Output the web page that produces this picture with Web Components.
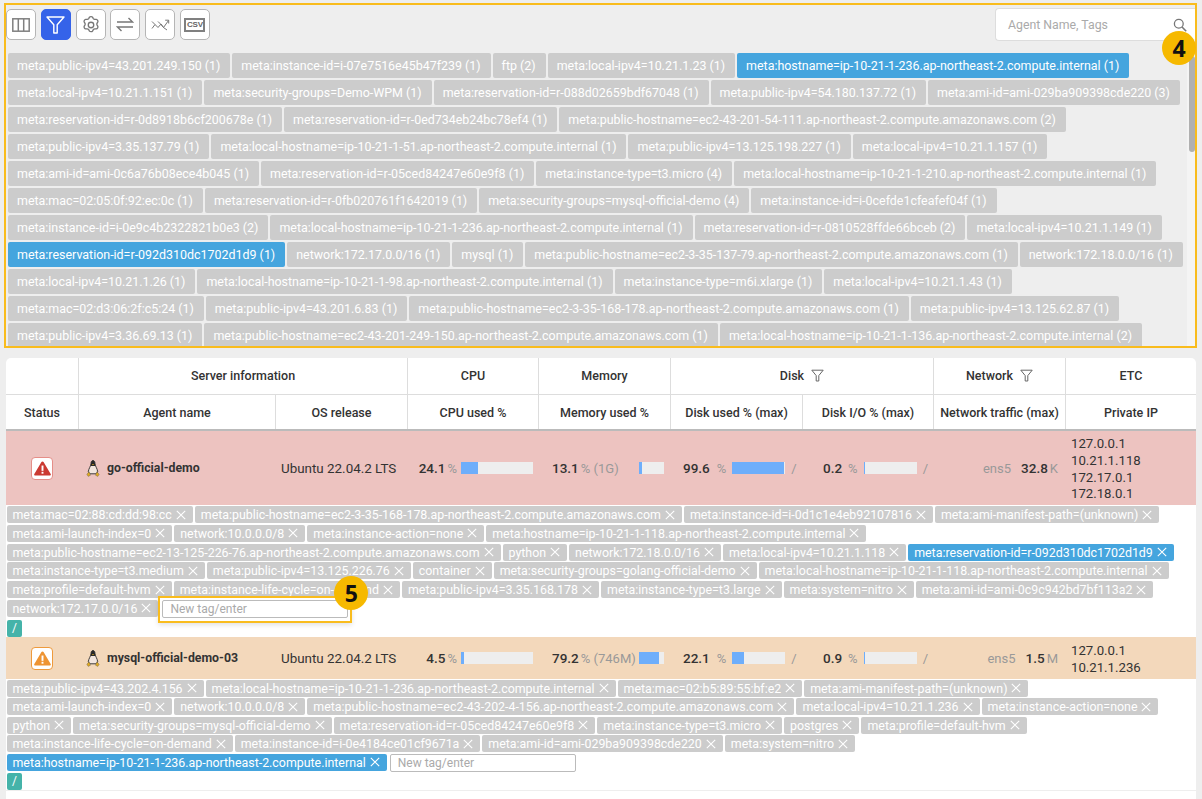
<!DOCTYPE html>
<html><head><meta charset="utf-8"><title>Agents</title>
<style>
html,body{margin:0;padding:0;background:#eee;overflow:hidden}
body{width:1202px;height:799px;font-family:Roboto,"Liberation Sans",sans-serif;color:#333}
</style></head><body>
<x-page></x-page>
<script>
const E=s=>s.replace(/&/g,'&amp;').replace(/</g,'&lt;');
function def(name,css,render){
  customElements.define(name,class extends HTMLElement{
    connectedCallback(){ if(this.shadowRoot)return; const r=this.attachShadow({mode:'open'});
      r.innerHTML='<style>'+css+'</style>'+render(this); }
  });
}
const ICONS={
 cols:'<svg width="18" height="14" viewBox="0 0 18 14" fill="none" stroke="#808080" stroke-width="1.5"><rect x=".8" y=".8" width="16.400" height="12.400"/><path d="M6.300 1v12M11.700 1v12"/></svg>',
 filter:'<svg width="19" height="18" viewBox="0 0 19 18" fill="none" stroke="#fff" stroke-width="1.400" stroke-linejoin="round"><path d="M1 1h17l-6.800 7.800V17H7.800V8.800z"/></svg>',
 gear:'<svg width="20" height="20" viewBox="0 0 24 24" fill="none" stroke="#777" stroke-width="1.600" stroke-linejoin="round" stroke-linecap="round"><circle cx="12" cy="12" r="3.300"/><path d="M10.200 2.600c.7-.9 3-.9 3.600 0l1 1.700c.4.600 1 .9 1.700.9h2c1.100.1 2.200 2.100 1.700 3.100l-1 1.700c-.3.600-.3 1.300 0 1.900l1 1.700c.5 1-.6 3-1.700 3.100h-2c-.7 0-1.300.3-1.700.9l-1 1.700c-.6.900-2.900.9-3.600 0l-1-1.700c-.4-.6-1-.9-1.700-.9h-2c-1.100-.1-2.200-2.100-1.700-3.100l1-1.700c.3-.6.3-1.300 0-1.900l-1-1.700c-.5-1 .6-3 1.700-3.100h2c.7 0 1.300-.3 1.700-.9z"/></svg>',
 swap:'<svg width="18" height="15" viewBox="0 0 18 15" fill="none" stroke="#777" stroke-width="1.400"><path d="M1 5h15.500L12.500 1M17 10H1.500l4 4"/></svg>',
 cross:'<svg width="19" height="12" viewBox="0 0 19 12" fill="none" stroke="#777" stroke-width="1"><path d="M1 2.500l3 3 3 3L10 5l2.500 3.500 5-7M14.200 1.200h3.500v3.300M1 9.500l3-4M7 2.500l3 3 2.500 3 3.500 2.500"/></svg>',
 search:'<svg width="14" height="14" viewBox="0 0 14 14" fill="none" stroke="#777" stroke-width="1.300"><circle cx="5.800" cy="5.800" r="4.400"/><path d="M9 9l4.200 4.200" stroke-width="1.600"/></svg>',
 funnel:'<svg width="13" height="13" viewBox="0 0 13 13" fill="none" stroke="#666" stroke-width="1"><path d="M.8 1.200h11.400L7.800 6.600v5.400H5.200V6.600z"/></svg>',
 tux:'<svg width="14" height="17" viewBox="0 0 14 17"><path d="M7 .6C5.500.6 5 2 5 3.800 5 5.800 2.600 8.600 2.300 11.800l1.400 2h6.600l1.400-2C11.400 8.600 9 5.800 9 3.800 9 2 8.500.6 7 .6z" fill="#f2e6df" stroke="#2a2a2a" stroke-width=".9"/><path d="M7 .6C5.500.6 5 2 5 3.800c0 .7-.3 1.500-.7 2.200h5.400C9.300 5.300 9 4.500 9 3.800 9 2 8.500.6 7 .6z" fill="#2a2a2a"/><path d="M5.900 4h2.200L7 5.200z" fill="#d9a520"/><path d="M.8 14.200l2.400-2.400 1.300 3.400-2.300 1.200zM13.200 14.200l-2.400-2.400-1.300 3.400 2.300 1.200z" fill="#e2ab1f" stroke="#555" stroke-width=".4"/></svg>',
 warn:c=>`<svg width="17" height="15" viewBox="0 0 16 14"><path d="M8 .3c.5 0 .8.2 1 .6l6.700 11.300c.4.700 0 1.500-.9 1.500H1.200c-.9 0-1.300-.8-.9-1.500L7 .9c.2-.4.500-.6 1-.6z" fill="${c}"/><rect x="7.100" y="4.200" width="1.800" height="5" fill="#fff"/><rect x="7.100" y="10.100" width="1.800" height="1.800" fill="#fff"/></svg>`
};
const CLOUD=[
["meta:public-ipv4=43.201.249.150 (1)","meta:instance-id=i-07e7516e45b47f239 (1)","ftp (2)","meta:local-ipv4=10.21.1.23 (1)","*meta:hostname=ip-10-21-1-236.ap-northeast-2.compute.internal (1)"],
["meta:local-ipv4=10.21.1.151 (1)","meta:security-groups=Demo-WPM (1)","meta:reservation-id=r-088d02659bdf67048 (1)","meta:public-ipv4=54.180.137.72 (1)","meta:ami-id=ami-029ba909398cde220 (3)"],
["meta:reservation-id=r-0d8918b6cf200678e (1)","meta:reservation-id=r-0ed734eb24bc78ef4 (1)","meta:public-hostname=ec2-43-201-54-111.ap-northeast-2.compute.amazonaws.com (2)"],
["meta:public-ipv4=3.35.137.79 (1)","meta:local-hostname=ip-10-21-1-51.ap-northeast-2.compute.internal (1)","meta:public-ipv4=13.125.198.227 (1)","meta:local-ipv4=10.21.1.157 (1)"],
["meta:ami-id=ami-0c6a76b08ece4b045 (1)","meta:reservation-id=r-05ced84247e60e9f8 (1)","meta:instance-type=t3.micro (4)","meta:local-hostname=ip-10-21-1-210.ap-northeast-2.compute.internal (1)"],
["meta:mac=02:05:0f:92:ec:0c (1)","meta:reservation-id=r-0fb020761f1642019 (1)","meta:security-groups=mysql-official-demo (4)","meta:instance-id=i-0cefde1cfeafef04f (1)"],
["meta:instance-id=i-0e9c4b2322821b0e3 (2)","meta:local-hostname=ip-10-21-1-236.ap-northeast-2.compute.internal (1)","meta:reservation-id=r-0810528ffde66bceb (2)","meta:local-ipv4=10.21.1.149 (1)"],
["*meta:reservation-id=r-092d310dc1702d1d9 (1)","network:172.17.0.0/16 (1)","mysql (1)","meta:public-hostname=ec2-3-35-137-79.ap-northeast-2.compute.amazonaws.com (1)","network:172.18.0.0/16 (1)"],
["meta:local-ipv4=10.21.1.26 (1)","meta:local-hostname=ip-10-21-1-98.ap-northeast-2.compute.internal (1)","meta:instance-type=m6i.xlarge (1)","meta:local-ipv4=10.21.1.43 (1)"],
["meta:mac=02:d3:06:2f:c5:24 (1)","meta:public-ipv4=43.201.6.83 (1)","meta:public-hostname=ec2-3-35-168-178.ap-northeast-2.compute.amazonaws.com (1)","meta:public-ipv4=13.125.62.87 (1)"],
["meta:public-ipv4=3.36.69.13 (1)","meta:public-hostname=ec2-43-201-249-150.ap-northeast-2.compute.amazonaws.com (1)","meta:local-hostname=ip-10-21-1-136.ap-northeast-2.compute.internal (2)"]
];
const CARD1=[
["meta:mac=02:88:cd:dd:98:cc","meta:public-hostname=ec2-3-35-168-178.ap-northeast-2.compute.amazonaws.com","meta:instance-id=i-0d1c1e4eb92107816","meta:ami-manifest-path=(unknown)"],
["meta:ami-launch-index=0","network:10.0.0.0/8","meta:instance-action=none","meta:hostname=ip-10-21-1-118.ap-northeast-2.compute.internal"],
["meta:public-hostname=ec2-13-125-226-76.ap-northeast-2.compute.amazonaws.com","python","network:172.18.0.0/16","meta:local-ipv4=10.21.1.118","*meta:reservation-id=r-092d310dc1702d1d9"],
["meta:instance-type=t3.medium","meta:public-ipv4=13.125.226.76","container","meta:security-groups=golang-official-demo","meta:local-hostname=ip-10-21-1-118.ap-northeast-2.compute.internal"],
["meta:profile=default-hvm","meta:instance-life-cycle=on-demand","meta:public-ipv4=3.35.168.178","meta:instance-type=t3.large","meta:system=nitro","meta:ami-id=ami-0c9c942bd7bf113a2"],
["network:172.17.0.0/16","#"]
];
const CARD2=[
["meta:public-ipv4=43.202.4.156","meta:local-hostname=ip-10-21-1-236.ap-northeast-2.compute.internal","meta:mac=02:b5:89:55:bf:e2","meta:ami-manifest-path=(unknown)"],
["meta:ami-launch-index=0","network:10.0.0.0/8","meta:public-hostname=ec2-43-202-4-156.ap-northeast-2.compute.amazonaws.com","meta:local-ipv4=10.21.1.236","meta:instance-action=none"],
["python","meta:security-groups=mysql-official-demo","meta:reservation-id=r-05ced84247e60e9f8","meta:instance-type=t3.micro","postgres","meta:profile=default-hvm"],
["meta:instance-life-cycle=on-demand","meta:instance-id=i-0e4184ce01cf9671a","meta:ami-id=ami-029ba909398cde220","meta:system=nitro"],
["*meta:hostname=ip-10-21-1-236.ap-northeast-2.compute.internal","@"]
];
const callout=`position:absolute;width:34px;height:34px;border-radius:50%;background:#f6b900;color:#111;font:700 23px/34px "Open Sans",Roboto,sans-serif;text-align:center;`;

def('x-callout',`:host{${callout}z-index:5}`,el=>E(el.getAttribute('n')));

def('x-toolbtn',`:host{display:flex;box-sizing:border-box;width:30px;height:31px;align-items:center;justify-content:center;background:#fff;border:1px solid #b5b5b5;border-radius:5px}
:host([on]){background:#3563e9;border-color:#3563e9}
.csv{display:block;box-sizing:border-box;width:21px;height:14px;border:2px solid #808080;font:700 8px/10px "Liberation Sans",sans-serif;color:#666;text-align:center;letter-spacing:-.2px}`,
 el=>el.getAttribute('icon')==='csv'?'<span class="csv">CSV</span>':ICONS[el.getAttribute('icon')]);

def('x-toolbar',`:host{display:flex;align-items:flex-start;justify-content:space-between;height:44px;padding:4px 0 0 0}
.l{display:flex;gap:4.800px}
.s{display:flex;box-sizing:border-box;align-items:center;justify-content:space-between;width:200px;height:33px;margin:-1px 0 0 0;padding:0 8px 0 12px;background:#fff;border:1px solid #ddd;border-radius:4px 0 0 4px;border-right:0;color:#aaa;font-size:12.300px}`,
 ()=>`<div class="l">${['cols','filter','gear','swap','cross','csv'].map(i=>`<x-toolbtn icon="${i}"${i==='filter'?' on':''}></x-toolbtn>`).join('')}</div>
 <div class="s"><span>Agent Name, Tags</span>${ICONS.search}</div>`);

def('x-chip',`:host{display:block;flex:none;box-sizing:border-box;height:24.500px;line-height:25px;padding:0 10px 0 9px;background:#ccc;color:#fff;font-size:12.450px;border-radius:2px;white-space:nowrap}
:host([on]){background:#45a5de}`,el=>'<slot></slot>');

def('x-cloud',`:host{display:block;position:relative;box-sizing:border-box;height:345px;margin:3px 5px 0 4px;border:2px solid #f9bc1d;overflow:hidden;background:#eee}
.rows{display:flex;flex-direction:column;gap:2.500px;height:300px;padding-left:2px}
.r{display:flex;gap:2px}
.sb{position:absolute;right:0;top:34px;bottom:0;width:8px;background:#f4f4f4}
.th{position:absolute;left:2px;top:17px;width:6px;height:96px;background:#b0b0b0;border-radius:3px}`,
 ()=>`<x-toolbar></x-toolbar><div class="rows">${CLOUD.map(r=>`<div class="r">${r.map(t=>{const on=t[0]==='*';return `<x-chip${on?' on':''}>${E(on?t.slice(1):t)}</x-chip>`}).join('')}</div>`).join('')}</div><div class="sb"><div class="th"></div></div>`);

def('x-tag',`:host{display:inline-flex;flex:none;align-items:center;gap:4px;box-sizing:border-box;height:17px;padding:0 7px 0 6px;background:#ccc;color:#fff;font-size:12.400px;border-radius:2px;white-space:nowrap}
:host([on]){background:#45a5de}
svg{display:block}`,el=>`<slot></slot><svg width="10" height="10" viewBox="0 0 10 10" stroke="#fff" stroke-width="1.100"><path d="M.8.8l8.400 8.400M9.200.8.800 9.200"/></svg>`);

def('x-newtag',`:host{display:block;position:relative;flex:none;box-sizing:border-box;width:186px;height:18px;line-height:16px;padding-left:7px;background:#fff;border:1px solid #bbb;border-radius:2px;color:#aaa;font-size:12px}
.box{position:absolute;left:-5px;top:-5px;right:-5px;bottom:-6px;border:2px solid #f9bc1d;box-shadow:0 2px 5px rgba(0,0,0,.12)}
x-callout{right:-21px;top:-25px}`,
 el=>`New tag/enter${el.hasAttribute('mark')?'<div class="box"></div><x-callout n="5"></x-callout>':''}`);

def('x-tags',`:host{display:block;background:#fff;padding:var(--pt) 0 0 .5px;height:var(--h);box-sizing:border-box}
.rows{display:flex;flex-direction:column;gap:var(--g)}
.r{display:flex;gap:2px}
.t{display:block;box-sizing:border-box;width:15px;height:17px;margin:var(--tm) 0 0 .5px;background:#45b3a9;color:#fff;font-size:12px;line-height:17px;text-align:center;border-radius:2px}`,
 el=>{const data=el.getAttribute('d')==='1'?CARD1:CARD2;
  return `<div class="rows">${data.map(r=>`<div class="r">${r.map(t=>{
    if(t==='#')return '<x-newtag mark style="margin-left:2px"></x-newtag>';
    if(t==='@')return '<x-newtag style="margin-left:1px"></x-newtag>';
    const on=t[0]==='*';return `<x-tag${on?' on':''}>${E(on?t.slice(1):t)}</x-tag>`}).join('')}</div>`).join('')}</div><div class="t">/</div>`});

def('x-bar',`:host{display:block;flex:none;width:var(--w);height:12px;background:#eee}
div{height:100%;background:#6eaefb;width:var(--f)}`,()=>'<div></div>');

const GRID='grid-template-columns:72px 197px 132px 131px 132px 132px 131px 132px 131px;';
def('x-head',`:host{display:grid;${GRID}grid-template-rows:37px 34px;background:#fff;border-radius:5px 5px 0 0;font-size:12.500px;font-weight:500;color:#333;border-bottom:2px solid #bbb;overflow:hidden}
div{display:flex;align-items:center;justify-content:center;gap:7px;border-left:1px solid #ddd;border-bottom:1px solid #ddd;white-space:nowrap;box-sizing:border-box;padding-bottom:2px}
.n{border-bottom:0;padding-bottom:0}.f{border-left:0}`,
 ()=>`<div class="f"></div><div style="grid-column:span 2">Server information</div><div>CPU</div><div>Memory</div><div style="grid-column:span 2">Disk ${ICONS.funnel}</div><div>Network ${ICONS.funnel}</div><div>ETC</div>
 <div class="n f">Status</div><div class="n">Agent name</div><div class="n">OS release</div><div class="n">CPU used %</div><div class="n">Memory used %</div><div class="n">Disk used % (max)</div><div class="n">Disk I/O % (max)</div><div class="n">Network traffic (max)</div><div class="n">Private IP</div>`);

def('x-row',`:host{display:grid;${GRID}align-items:center;background:var(--bg);height:var(--rh);font-size:13px;color:#333;white-space:nowrap}
.st{display:flex;justify-content:center}
.ib{display:flex;box-sizing:border-box;width:22px;height:23px;align-items:center;justify-content:center;background:#fff;border:1.500px solid var(--c);border-radius:4px}
.nm{display:flex;align-items:center;gap:7px;padding-left:8px;font-size:12.300px;font-weight:700}
.os{padding-left:6px;font-size:13.400px}
.m{display:flex;align-items:center}
b{font-weight:500;font-size:13.500px}
i{font-style:normal;color:#999;font-size:13px}
.ip{padding:3px 0 0 6px;line-height:16.700px;font-size:13.200px}`,
 el=>{const d=JSON.parse(el.getAttribute('d'));
  const bar=(w,f)=>`<x-bar style="--w:${w}px;--f:${f}px"></x-bar>`;
  return `<div class="st"><div class="ib">${ICONS.warn(d.c)}</div></div>
  <div class="nm">${ICONS.tux}<span>${d.name}</span></div>
  <div class="os">Ubuntu 22.04.2 LTS</div>
  <div class="m" style="justify-content:flex-end;padding-right:5px"><b>${d.cpu}</b><i style="margin:0 4px 0 2px">%</i>${bar(72,d.cf)}</div>
  <div class="m" style="padding-left:14px"><b>${d.mem}</b><i style="margin-left:2px">% ${d.mm}</i><span style="flex:1"></span><span style="margin-right:6px">${bar(25,d.mf)}</span></div>
  <div class="m" style="padding-left:13px"><b>${d.disk}</b><i style="margin:0 6px 0 7px">%</i>${bar(53,d.df)}<i style="margin-left:6px">/</i></div>
  <div class="m" style="padding-left:21px"><b>${d.io}</b><i style="margin:0 6px">%</i>${bar(53,d.iof)}<i style="margin-left:6px">/</i></div>
  <div class="m" style="justify-content:flex-end;padding-right:7px"><i>ens5</i><b style="margin:0 2px 0 10px">${d.net}</b><i>${d.nu}</i></div>
  <div class="ip">${d.ips.join('<br>')}</div>`});

def('x-table',`:host{display:block;width:1190px;margin:10px 0 0 6px}
.end{height:1px;background:#eee}
.fill{height:12px;background:#fff}`,
 ()=>`<x-head></x-head>
 <x-row style="--bg:#edc3c0;--rh:74px;--c:#e58e88" d='${JSON.stringify({c:"#cb3a32",name:"go-official-demo",cpu:"24.1",cf:17,mem:"13.1",mm:"(1G)",mf:3,disk:"99.6",df:52,io:"0.2",iof:1,net:"32.8",nu:"K",ips:["127.0.0.1","10.21.1.118","172.17.0.1","172.18.0.1"]})}'></x-row>
 <x-tags d="1" style="--h:132px;--pt:1px;--g:1.800px;--tm:2px"></x-tags>
 <x-row style="--bg:#f3d8bb;--rh:42px;--c:#ee9a3c" d='${JSON.stringify({c:"#ee9433",name:"mysql-official-demo-03",cpu:"4.5",cf:3,mem:"79.2",mm:"(746M)",mf:20,disk:"22.1",df:12,io:"0.9",iof:1,net:"1.5",nu:"M",ips:["127.0.0.1","10.21.1.236"]})}'></x-row>
 <x-tags d="2" style="--h:111px;--pt:.5px;--g:1.500px;--tm:1px"></x-tags><div class="end"></div><div class="fill"></div>`);

def('x-page',`:host{display:block;position:relative;width:1202px;height:799px;overflow:hidden;background:#eee}
x-callout{left:1162px;top:31px}`,
 ()=>`<x-cloud></x-cloud><x-table></x-table><x-callout n="4"></x-callout>`);
</script>
</body></html>
